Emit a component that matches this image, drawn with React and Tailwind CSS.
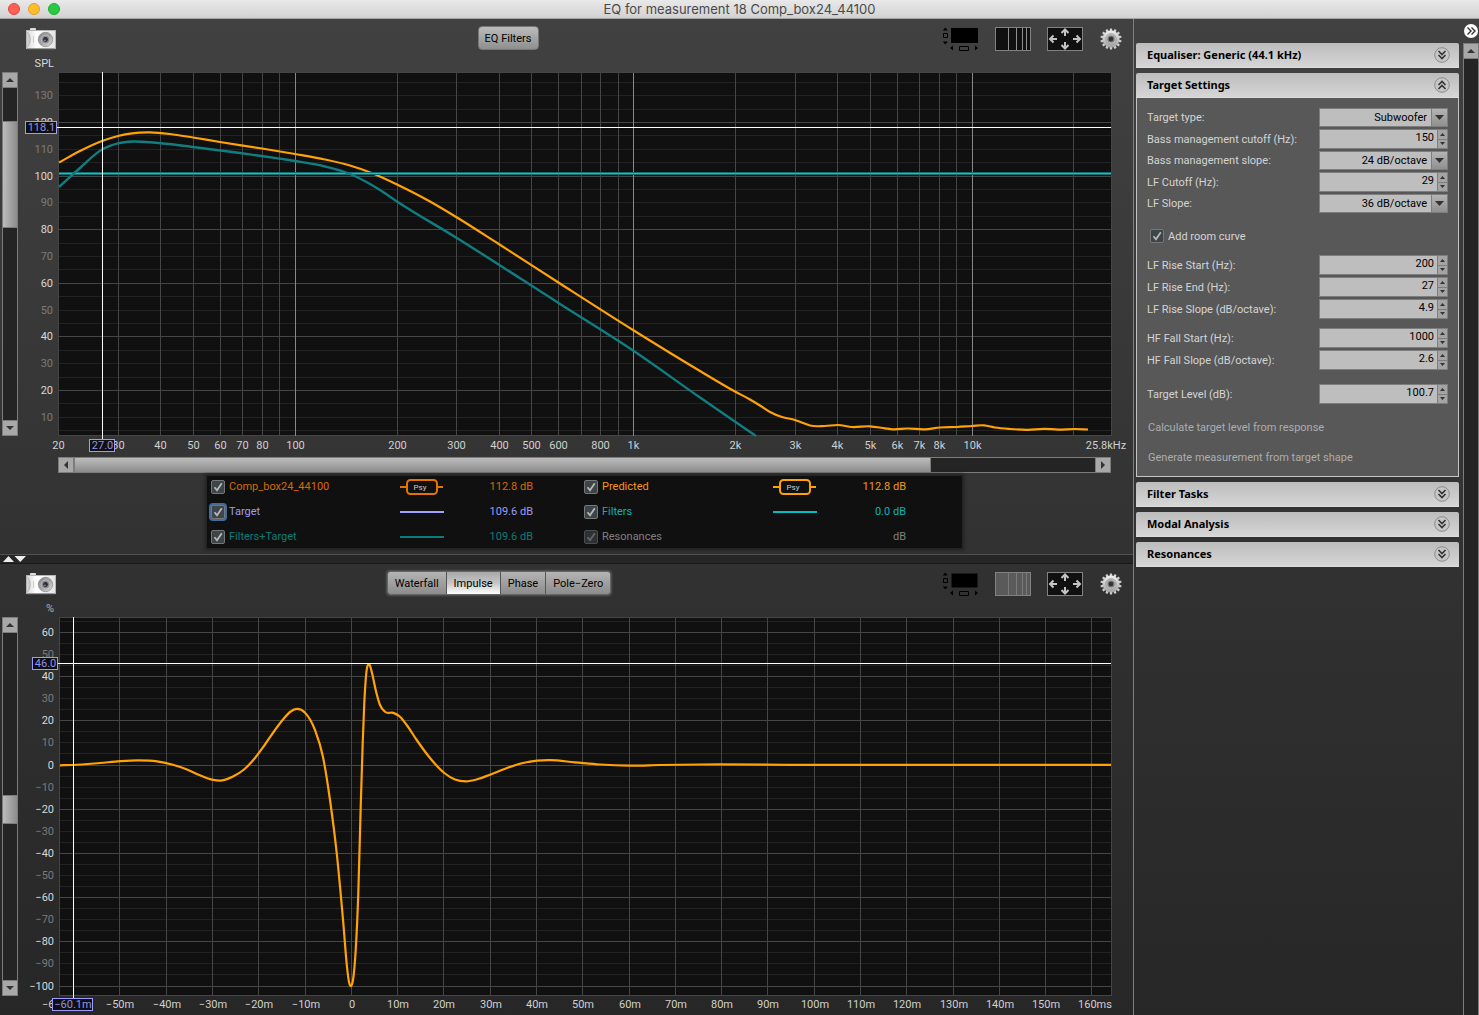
import { useState } from 'react'
import clsx from 'clsx'

// Cubic Hermite curve through a list of [x, y] samples, x ascending
function smooth(points) {
  const slope = (a, b) => (b[1] - a[1]) / (b[0] - a[0])
  const tangents = points.map((p, i) => {
    if (i === 0) return slope(p, points[1])
    if (i === points.length - 1) return slope(points[i - 1], p)
    const h0 = p[0] - points[i - 1][0]
    const h1 = points[i + 1][0] - p[0]
    return (slope(points[i - 1], p) * h1 + slope(p, points[i + 1]) * h0) / (h0 + h1)
  })
  let d = `M${points[0][0]} ${points[0][1]}`
  for (let i = 0; i < points.length - 1; i++) {
    const [x0, y0] = points[i]
    const [x1, y1] = points[i + 1]
    const dx = (x1 - x0) / 3
    d += `C${x0 + dx} ${y0 + dx * tangents[i]} ${x1 - dx} ${y1 - dx * tangents[i + 1]} ${x1} ${y1}`
  }
  return d
}

const predicted = smooth([
  [59, 162.5], [80, 151], [102, 141], [118, 136], [132, 133.3], [150, 132.4], [170, 134], [193, 137.5],
  [220, 142], [262, 148.5], [295, 154], [325, 159.5], [350, 165.5], [373, 173.5], [397, 184.5], [430, 201.5],
  [457, 217.5], [498, 243.5], [560, 283.5], [633, 330], [700, 371], [735, 391.5], [750, 399.5],
  [760, 405.5], [770, 412], [782, 417], [795, 420], [803, 423], [810, 425.5], [825, 426], [838, 425],
  [852, 427], [870, 426.3], [885, 428.3], [893, 429.3], [907, 428.5], [925, 429.3], [940, 427.5], [957, 427],
  [972, 426], [984, 425.3], [995, 427.5], [1010, 429], [1028, 429.8], [1044, 428.8], [1058, 429.6],
  [1075, 429], [1088, 429.5],
])

const filtersTarget = smooth([
  [59, 187], [80, 168], [102, 149.5], [110, 145.8], [118, 143.3], [133, 141.5], [150, 142.2], [193, 147],
  [242, 153.3], [295, 161], [325, 166.5], [350, 174], [370, 184], [380, 190], [397, 201.5],
  [456, 237.5], [560, 304], [633, 350.5], [700, 397.5], [756, 436],
])

const impulse = smooth([
  [60, 765.3], [73, 765], [100, 763], [120, 761.2], [138, 760.4], [157, 761.3], [172, 764.5], [187, 769.5],
  [200, 775.3], [212, 779.6], [221, 780.6], [233, 776.5], [244, 769.5], [255, 758], [265, 744.5], [275, 730],
  [283, 719.5], [290, 712], [297, 708.9], [305, 712.7], [315, 730], [323, 757], [330, 800], [336.7, 853],
  [343.3, 923], [347, 967], [349, 982], [351, 986], [353, 980], [355.7, 950], [358.3, 893], [360.7, 807],
  [362.7, 743], [364.3, 703], [366.3, 673], [369, 664.3], [372, 673], [375.7, 690], [380, 705], [385, 711.7],
  [393.3, 712.9], [400, 716.7], [406.7, 725], [416.7, 740], [430, 758], [444.3, 773], [455, 779.5],
  [466, 781.3], [478, 779], [490, 774.7], [507, 768], [523, 763], [537, 760.6], [550, 760.2], [575, 762.3],
  [600, 764.5], [630, 765.6], [660, 765], [700, 764.5], [800, 764.8], [1111, 764.8],
])

const freqX = (f) => Math.floor(295.3 + Math.log10(f / 100) * 338.4) + 0.5
const splY = (v) => Math.floor(176.1 + (100 - v) * 2.68) + 0.5
const msX = (t) => Math.floor(351.4 + t * 4.628) + 0.5
const pctY = (v) => Math.floor(765 - v * 2.21) + 0.5

const range = (from, to, step) => {
  const out = []
  for (let v = from; v <= to; v += step) out.push(v)
  return out
}

const freqLines = [30, 40, 50, 60, 70, 80, 90, 100, 200, 300, 400, 500, 600, 700, 800, 900, 1000,
  2000, 3000, 4000, 5000, 6000, 7000, 8000, 9000, 10000, 20000]
const freqLabels = [[20, '20'], [30, '30'], [40, '40'], [50, '50'], [60, '60'], [70, '70'], [80, '80'],
  [100, '100'], [200, '200'], [300, '300'], [400, '400'], [500, '500'], [600, '600'], [800, '800'],
  [1000, '1k'], [2000, '2k'], [3000, '3k'], [4000, '4k'], [5000, '5k'], [6000, '6k'], [7000, '7k'],
  [8000, '8k'], [10000, '10k']]

function CursorTag({ x, y, width, children }) {
  return (
    <g>
      <rect x={x + 0.5} y={y + 0.5} width={width} height="12" fill="#101010" stroke="#9c9cff" />
      <text x={x + width / 2 + 1} y={y + 10} textAnchor="middle" fill="#9090f0">{children}</text>
    </g>
  )
}

function SplChart() {
  return (
    <svg viewBox="18 59 1115 394" className="block min-w-0 flex-1 overflow-visible text-[11px]" role="img" aria-label="SPL against frequency">
      <text x="54" y="67" textAnchor="end" fill="#d8d8d8">SPL</text>
      <rect x="58.5" y="72.5" width="1053" height="363" fill="#101010" stroke="#444" />
      {range(5, 135, 5).map((v) => (
        <path key={v} d={`M59 ${splY(v)}H1111`} stroke={v % 20 ? '#232323' : '#464646'} />
      ))}
      {freqLines.map((f) => (
        <path key={f} d={`M${freqX(f)} 73V436`} stroke={Math.log10(f) % 1 ? '#464646' : '#888'} />
      ))}
      {range(10, 130, 10).map((v) => (
        <text key={v} x="53" y={splY(v) + 3.5} textAnchor="end" fill={v % 20 ? '#7a7a7a' : '#d8d8d8'}>{v}</text>
      ))}
      {freqLabels.map(([f, label]) => (
        <text key={f} x={freqX(f)} y="449" textAnchor="middle" fill="#d0d0d0">{label}</text>
      ))}
      <text x="1106" y="449" textAnchor="middle" fill="#d0d0d0">25.8kHz</text>
      <path d={predicted} fill="none" stroke="#ffa206" strokeWidth="2.2" />
      <path d="M59 173.5H1111" stroke="#0d6f70" strokeWidth="3" />
      <path d="M59 173.5H1111" stroke="#0cc" />
      <path d={filtersTarget} fill="none" stroke="#127d80" strokeWidth="2.4" />
      <path d="M57 127.5H1111M102.5 72V439" stroke="#fff" />
      <CursorTag x={25} y={121} width={31}>118.1</CursorTag>
      <CursorTag x={89} y={439} width={25}>27.0</CursorTag>
    </svg>
  )
}

function ImpulseChart() {
  return (
    <svg viewBox="18 604 1115 411" className="block min-w-0 flex-1 overflow-visible text-[11px]" role="img" aria-label="Impulse response">
      <text x="54" y="612" textAnchor="end" fill="#b0b0b0">%</text>
      <rect x="59.5" y="617.5" width="1052" height="378" fill="#101010" stroke="#444" />
      {range(-100, 65, 5).map((v) => (
        <path key={v} d={`M60 ${pctY(v)}H1111`} stroke={v % 20 ? '#232323' : '#464646'} />
      ))}
      {range(-50, 160, 10).map((t) => (
        <path key={t} d={`M${msX(t)} 618V995`} stroke="#464646" />
      ))}
      {range(-100, 60, 10).map((v) => (
        <text key={v} x="54" y={pctY(v) + 3.5} textAnchor="end" fill={v % 20 ? '#7a7a7a' : '#d8d8d8'}>
          {String(v).replace('-', '−')}
        </text>
      ))}
      {range(-50, 150, 10).map((t) => (
        <text key={t} x={msX(t) + 0.5} y="1008" textAnchor="middle" fill="#d0d0d0">
          {t ? `${String(t).replace('-', '−')}m` : '0'}
        </text>
      ))}
      <text x="42" y="1008" fill="#d0d0d0">−60</text>
      <text x="1095" y="1008" textAnchor="middle" fill="#d0d0d0">160ms</text>
      <path d={impulse} fill="none" stroke="#ffa206" strokeWidth="2.2" />
      <path d="M58 663.5H1111M73.5 617V998" stroke="#fff" />
      <CursorTag x={32} y={657} width={25}>46.0</CursorTag>
      <CursorTag x={52} y={998} width={40}>−60.1m</CursorTag>
    </svg>
  )
}

function Triangle({ dir }) {
  const d = { up: 'M0 6 4 2 8 6Z', down: 'M0 2 4 6 8 2Z', left: 'M6 0 2 4 6 8Z', right: 'M2 0 6 4 2 8Z' }[dir]
  return (
    <svg viewBox="0 0 8 8" className="size-2 fill-[#333]">
      <path d={d} />
    </svg>
  )
}

function ScrollBar({ vertical, before, thumb, after, label, upOnly }) {
  const edge = clsx('flex size-4 shrink-0 items-center justify-center border border-[#7c7c7c] bg-[#a8a8a8]', vertical ? '-mx-px' : '-my-px')
  return (
    <div
      role="scrollbar"
      aria-label={label}
      aria-controls="root"
      aria-valuenow={before}
      className={clsx('flex bg-[#242424]', vertical ? 'w-4 flex-col border-x border-[#7c7c7c]' : 'h-4 border-y border-[#7c7c7c]')}
    >
      <button aria-label={vertical ? 'Scroll up' : 'Scroll left'} className={edge}>
        <Triangle dir={vertical ? 'up' : 'left'} />
      </button>
      <div style={{ flexGrow: before }} />
      {thumb > 0 && (
        <div
          style={{ flexGrow: thumb }}
          className={clsx(
            'border-[#7c7c7c] from-[#bcbcbc] to-[#8c8c8c]',
            vertical ? 'border-y bg-linear-to-r' : 'border-x bg-linear-to-b',
          )}
        />
      )}
      <div style={{ flexGrow: after }} />
      {!upOnly && (
        <button aria-label={vertical ? 'Scroll down' : 'Scroll right'} className={edge}>
          <Triangle dir={vertical ? 'down' : 'right'} />
        </button>
      )}
    </div>
  )
}

function CameraIcon() {
  return (
    <svg viewBox="0 0 30 22" className="block h-[22px] w-[30px]">
      <defs>
        <linearGradient id="camBody" x2="1" y2="0">
          <stop offset="0" stopColor="#d8d8d8" />
          <stop offset=".35" stopColor="#fff" />
          <stop offset="1" stopColor="#e4e4e4" />
        </linearGradient>
        <linearGradient id="camLens" x2="1" y2="1">
          <stop offset="0" stopColor="#8a8a8a" />
          <stop offset=".5" stopColor="#a4a4a4" />
          <stop offset="1" stopColor="#e0e0e0" />
        </linearGradient>
      </defs>
      <rect x="4" y="0" width="6" height="4" rx="1" fill="#ddd" />
      <rect x=".5" y="2.5" width="29" height="18" fill="url(#camBody)" stroke="#b5b5b5" />
      <path d="M1.500 4c3.500 4 3.500 11 0 15" fill="#ccc" stroke="#aaa" strokeWidth=".8" />
      <path d="M7.500 8v7" stroke="#ccc" />
      <circle cx="19.500" cy="11.500" r="7.200" fill="url(#camLens)" stroke="#858585" strokeWidth=".7" />
      <circle cx="19.500" cy="11.500" r="4.300" fill="#8c8c8c" stroke="#c4c4c4" strokeWidth=".8" />
      <circle cx="19.500" cy="11.500" r="2.400" fill="#2c2c38" />
      <circle cx="19" cy="12.200" r=".8" fill="#8ab" />
      <path d="M1 20.800h28" stroke="#888" strokeWidth=".8" />
    </svg>
  )
}

function GearIcon() {
  return (
    <svg viewBox="0 0 22 22" className="block size-[22px]">
      <defs>
        <linearGradient id="gearMetal" x2="0" y2="1">
          <stop offset="0" stopColor="#f0f0f0" />
          <stop offset="1" stopColor="#a2a2a2" />
        </linearGradient>
      </defs>
      {range(0, 345, 360 / 14).map((a) => (
        <path key={a} d="M9.600 3 10 .4h2l.4 2.600Z" fill="#cfcfcf" transform={`rotate(${a} 11 11)`} />
      ))}
      <circle cx="11" cy="11" r="8.400" fill="url(#gearMetal)" />
      <circle cx="11" cy="11" r="5.400" fill="#bbb" stroke="#999" strokeWidth=".7" />
      <circle cx="11" cy="11" r="3.600" fill="#777" />
      <circle cx="11" cy="11" r="2.300" fill="#333" />
    </svg>
  )
}

function ChartTools({ dimGrid }) {
  return (
    <div className="flex items-center gap-4 pr-[11px]">
      <button aria-label="Toggle scrollbars">
        <svg viewBox="0 0 37 24" className="block h-6 w-[37px]">
          <rect x="9" y="1" width="27" height="15" fill="#000" stroke={dimGrid ? '#333' : 'none'} />
          <path d="M.8 3.500h5L3.300.5ZM.8 14.500h5l-2.500 3ZM11 18.500v5l-3-2.500ZM33 18.500v5l3-2.500Z" fill="#000" />
          <path d="M1.500 6.500h4v4h-4ZM17.500 19.500h9v4h-9Z" fill="none" stroke="#000" />
        </svg>
      </button>
      <button aria-label="Logarithmic axis">
        <svg viewBox="0 0 36 24" className="block h-6 w-9">
          <rect x=".5" y=".5" width="35" height="23" fill={dimGrid ? '#5a5a5a' : '#101010'} stroke="#828282" />
          <path d="M13.500 1v22M21.500 1v22M27.500 1v22M31.500 1v22" stroke={dimGrid ? '#7a7a7a' : '#909090'} />
        </svg>
      </button>
      <button aria-label="Fit to data">
        <svg viewBox="0 0 36 24" className="block h-6 w-9">
          <rect x=".5" y=".5" width="35" height="23" fill="#101010" stroke="#828282" />
          <path d="M18 9V3M14.500 6 18 2.500 21.500 6M18 15v6M14.500 18l3.500 3.500 3.500-3.500M10 12H3M6.500 8.500 3 12l3.500 3.500M26 12h7M29.500 8.500 33 12l-3.500 3.500" fill="none" stroke="#c4c4c4" strokeWidth="2" />
        </svg>
      </button>
      <button aria-label="Graph controls" className="pl-px">
        <GearIcon />
      </button>
    </div>
  )
}

const traces = [
  { name: 'Comp_box24_44100', value: '112.8 dB', color: '#e67300', text: 'text-[#d46a00]', psy: true },
  { name: 'Predicted', value: '112.8 dB', color: '#ffa206', text: 'text-[#f09a0c]', psy: true },
  { name: 'Target', value: '109.6 dB', color: '#a0a0ff', text: 'text-[#9c9cf4]', focused: true },
  { name: 'Filters', value: '0.0 dB', color: '#00c0c4', text: 'text-[#08b4b4]' },
  { name: 'Filters+Target', value: '109.6 dB', color: '#0a7c7c', text: 'text-[#0a7c78]' },
  { name: 'Resonances', value: 'dB', text: 'text-[#808080]', disabled: true },
]

function CheckBox({ focused, disabled }) {
  const [on, setOn] = useState(true)
  return (
    <span className="relative flex size-[14px] shrink-0">
      <input
        type="checkbox"
        checked={on}
        disabled={disabled}
        onChange={() => setOn(!on)}
        className={clsx(
          'size-[14px] appearance-none rounded-[2px] border',
          disabled ? 'border-[#4c4c4c] bg-[#2d3133]' : 'border-[#777] bg-[#3d4548]',
          focused && 'ring-2 ring-[#3f6c9c]',
        )}
      />
      {on && (
        <svg viewBox="0 0 14 14" className="pointer-events-none absolute inset-0" fill="none" stroke={disabled ? '#666' : '#b8b8b8'} strokeWidth="1.800">
          <path d="M3.500 7.200 6 10.300 10.800 3.200" />
        </svg>
      )}
    </span>
  )
}

function Legend() {
  return (
    <ul className="mx-auto mt-[3px] grid w-[755px] grid-cols-[373px_373px] gap-y-1 bg-[#101010] pb-px shadow-[0_0_3px_2px_#222]">
      {traces.map((t) => (
        <li key={t.name} className={clsx('flex h-[21px] items-center pl-1', t.text)}>
          <label className="flex w-[189px] items-center gap-1">
            <CheckBox focused={t.focused} disabled={t.disabled} />
            {t.name}
          </label>
          <svg viewBox="0 0 44 16" className="h-4 w-11" fill="none" stroke={t.color} strokeWidth="2">
            {t.psy ? (
              <>
                <path d="M0 8h7M37 8h6" />
                <rect x="7" y="1" width="30" height="14" rx="3.500" />
                <text x="20" y="11" textAnchor="middle" stroke="none" fill="#ccc" className="text-[8px]">Psy</text>
              </>
            ) : (
              t.color && <path d="M0 8h44" />
            )}
          </svg>
          <span className="w-[89px] text-right">{t.value}</span>
        </li>
      ))}
    </ul>
  )
}

function Chevrons({ up }) {
  return (
    <svg viewBox="0 0 16 16" className="size-4" fill="none">
      <circle cx="8" cy="8" r="7.300" stroke="#8c8c8c" fill="#c6c6c6" />
      <path d={up ? 'M4.500 8 8 4.500 11.500 8M4.500 12 8 8.500 11.500 12' : 'M4.500 4 8 7.500 11.500 4M4.500 8 8 11.500 11.500 8'} stroke="#333" strokeWidth="1.600" />
    </svg>
  )
}

function PanelHeader({ title, open }) {
  return (
    <button
      aria-expanded={!!open}
      className="flex h-[25px] w-full items-center justify-between rounded-t-[2px] border-b border-[#ddd] bg-linear-to-b from-[#bcbcbc] to-[#d6d6d6] pr-[9px] pl-[11px] font-['Noto_Sans',sans-serif] leading-[14px] font-bold text-black"
    >
      {title}
      <Chevrons up={open} />
    </button>
  )
}

function SelectRow({ id, label, value }) {
  return (
    <div className="flex h-[19px] items-center justify-between">
      <label htmlFor={id}>{label}</label>
      <div className="relative flex h-[19px] w-[129px]">
        <select id={id} className="w-full appearance-none border border-[#7e7e7e] bg-[#bebebe] pr-5 text-right leading-4 text-black [text-align-last:right]">
          <option>{value}</option>
        </select>
        <span className="pointer-events-none absolute inset-y-0 right-0 flex w-[17px] items-center justify-center border border-[#7e7e7e] bg-linear-to-b from-[#b4b4b4] to-[#909090]">
          <svg viewBox="0 0 9 5" className="h-[5px] w-[9px] fill-[#333]">
            <path d="M0 0h9L4.500 5Z" />
          </svg>
        </span>
      </div>
    </div>
  )
}

function SpinnerRow({ id, label, value }) {
  return (
    <div className="flex h-5 items-center justify-between">
      <label htmlFor={id}>{label}</label>
      <div className="flex h-5 w-[129px] border border-[#7e7e7e] bg-[#bebebe]">
        <input id={id} defaultValue={value} inputMode="decimal" className="min-w-0 flex-1 pr-[3px] pb-[2px] text-right leading-4 text-black outline-none" />
        <div className="flex w-[10px] flex-col border-l border-[#7e7e7e] bg-[#a4a4a4]">
          <button aria-label={`Increase ${label}`} className="flex flex-1 items-center justify-center border-b border-[#7e7e7e]">
            <svg viewBox="0 0 5 3" className="h-[3px] w-[5px] fill-[#333]"><path d="M0 3h5L2.500 0Z" /></svg>
          </button>
          <button aria-label={`Decrease ${label}`} className="flex flex-1 items-center justify-center">
            <svg viewBox="0 0 5 3" className="h-[3px] w-[5px] fill-[#333]"><path d="M0 0h5L2.500 3Z" /></svg>
          </button>
        </div>
      </div>
    </div>
  )
}

function Sidebar() {
  return (
    <aside className="flex w-[346px] shrink-0 border-l border-[#808080]">
      <div className="flex flex-1 flex-col gap-[5px] pt-6 pr-1 pl-[2px]">
        <PanelHeader title="Equaliser: Generic (44.1 kHz)" />
        <section>
          <PanelHeader title="Target Settings" open />
          <div className="flex flex-col border border-t-0 border-[#c4c4c4] bg-[#585858] px-[10px] pt-[10px] pb-[11px] text-[#d4d4d4]">
            <div className="flex flex-col gap-[2px]">
              <SelectRow id="type" label="Target type:" value="Subwoofer" />
              <SpinnerRow id="cutoff" label="Bass management cutoff (Hz):" value="150" />
              <SelectRow id="slope" label="Bass management slope:" value="24 dB/octave" />
              <SpinnerRow id="lfcut" label="LF Cutoff (Hz):" value="29" />
              <SelectRow id="lfslope" label="LF Slope:" value="36 dB/octave" />
            </div>
            <label className="mt-4 flex h-[14px] items-center gap-1 pl-[3px]">
              <CheckBox />
              Add room curve
            </label>
            <div className="mt-3 flex flex-col gap-[2px]">
              <SpinnerRow id="risestart" label="LF Rise Start (Hz):" value="200" />
              <SpinnerRow id="riseend" label="LF Rise End (Hz):" value="27" />
              <SpinnerRow id="riseslope" label="LF Rise Slope (dB/octave):" value="4.9" />
            </div>
            <div className="mt-[9px] flex flex-col gap-[2px]">
              <SpinnerRow id="fallstart" label="HF Fall Start (Hz):" value="1000" />
              <SpinnerRow id="fallslope" label="HF Fall Slope (dB/octave):" value="2.6" />
            </div>
            <div className="mt-[14px]">
              <SpinnerRow id="level" label="Target Level (dB):" value="100.7" />
            </div>
            <div className="mt-[15px] flex flex-col items-start gap-[14px] pl-px text-[#adadad]">
              <button className="h-4">Calculate target level from response</button>
              <button className="h-4">Generate measurement from target shape</button>
            </div>
          </div>
        </section>
        <PanelHeader title="Filter Tasks" />
        <PanelHeader title="Modal Analysis" />
        <PanelHeader title="Resonances" />
      </div>
      <div className="flex w-4 flex-col">
        <div className="flex h-6 items-center justify-center">
          <button aria-label="Collapse panel" className="shrink-0">
            <svg viewBox="0 0 14 14" className="block size-[14px]" fill="none">
              <circle cx="7" cy="7" r="7" fill="#fff" />
              <path d="M3.500 3.500 7 7l-3.500 3.500M7.500 3.500 11 7l-3.500 3.500" stroke="#333" strokeWidth="1.400" />
            </svg>
          </button>
        </div>
        <div className="flex flex-1">
          <ScrollBar vertical upOnly before={0} thumb={0} after={1} label="Settings" />
        </div>
      </div>
    </aside>
  )
}

const tabs = ['Waterfall', 'Impulse', 'Phase', 'Pole−Zero']

export default function App() {
  const [tab, setTab] = useState('Impulse')

  return (
    <div className="flex min-h-screen flex-col bg-[#282828] font-[Roboto,sans-serif] text-[11px] leading-[15px]">
      <header className="flex h-[19px] items-center border-b border-[#a4a4a4] bg-linear-to-b from-[#e9e9e9] to-[#d2d2d2] pb-px">
        <div className="flex w-[68px] gap-2 pl-2">
          <button aria-label="Close" className="size-3 rounded-full border border-[#e0443e] bg-[#ff5f57]" />
          <button aria-label="Minimise" className="size-3 rounded-full border border-[#dea123] bg-[#ffbd2e]" />
          <button aria-label="Zoom" className="size-3 rounded-full border border-[#1dad2b] bg-[#28ca41]" />
        </div>
        <h1 className="flex-1 pr-[68px] text-center font-[Inter,sans-serif] text-[13px] leading-[14px] text-[#4a4a4a]">
          EQ for measurement 18 Comp_box24_44100
        </h1>
      </header>

      <div className="flex flex-1 bg-linear-to-b from-[#414141] via-[#303030] via-60% to-[#272727]">
        <main className="flex min-w-0 flex-1 flex-col">
          <section>
            <div className="flex h-10 items-center pl-[26px]">
              <button aria-label="Capture graph"><CameraIcon /></button>
              <div className="flex flex-1 justify-center pb-[2px] pl-[18px]">
                <button className="h-6 w-[61px] rounded-[4px] border border-[#777] bg-linear-to-b from-[#bcbcbc] to-[#8f8f8f] text-black">
                  EQ Filters
                </button>
              </div>
              <ChartTools />
            </div>
            <div className="flex">
              <div className="flex shrink-0 pt-[13px] pb-[17px] pl-[2px]">
                <ScrollBar vertical before={33} thumb={105} after={192} label="SPL range" />
              </div>
              <SplChart />
            </div>
            <div className="pt-1 pr-[22px] pb-[6px] pl-[58px]">
              <ScrollBar before={0} thumb={857} after={164} label="Frequency range" />
              <Legend />
            </div>
          </section>

          <div className="flex h-[10px] items-center border-t border-b border-t-[#505050] border-b-[#1a1a1a] bg-[#262626] pl-[3px]">
            <svg viewBox="0 0 23 6" className="h-[6px] w-[23px] fill-[#eee]">
              <path d="M0 6 5.500 0 11 6ZM11.500 0h11.500L17.200 6Z" />
            </svg>
          </div>

          <section>
            <div className="flex h-10 items-center pl-[26px]">
              <button aria-label="Capture graph"><CameraIcon /></button>
              <div className="flex flex-1 justify-center pb-[2px]">
                <div role="tablist" className="flex h-6 overflow-hidden rounded-[3px] border border-[#666] text-black shadow-[0_0_2px_1px_#555]">
                  {tabs.map((name) => (
                    <button
                      key={name}
                      role="tab"
                      aria-selected={tab === name}
                      onClick={() => setTab(name)}
                      className={clsx(
                        'border-r border-[#555] px-[7px] last:border-r-0',
                        tab === name ? 'bg-linear-to-b from-[#a8a8a8] via-[#c6c6c6] to-white' : 'bg-linear-to-b from-[#b4b4b4] to-[#8c8c8c]',
                      )}
                    >
                      {name}
                    </button>
                  ))}
                </div>
              </div>
              <ChartTools dimGrid />
            </div>
            <div className="flex">
              <div className="flex shrink-0 pt-[13px] pb-[19px] pl-[2px]">
                <ScrollBar vertical before={162} thumb={27} after={156} label="Amplitude range" />
              </div>
              <ImpulseChart />
            </div>
          </section>
        </main>
        <Sidebar />
      </div>
    </div>
  )
}
